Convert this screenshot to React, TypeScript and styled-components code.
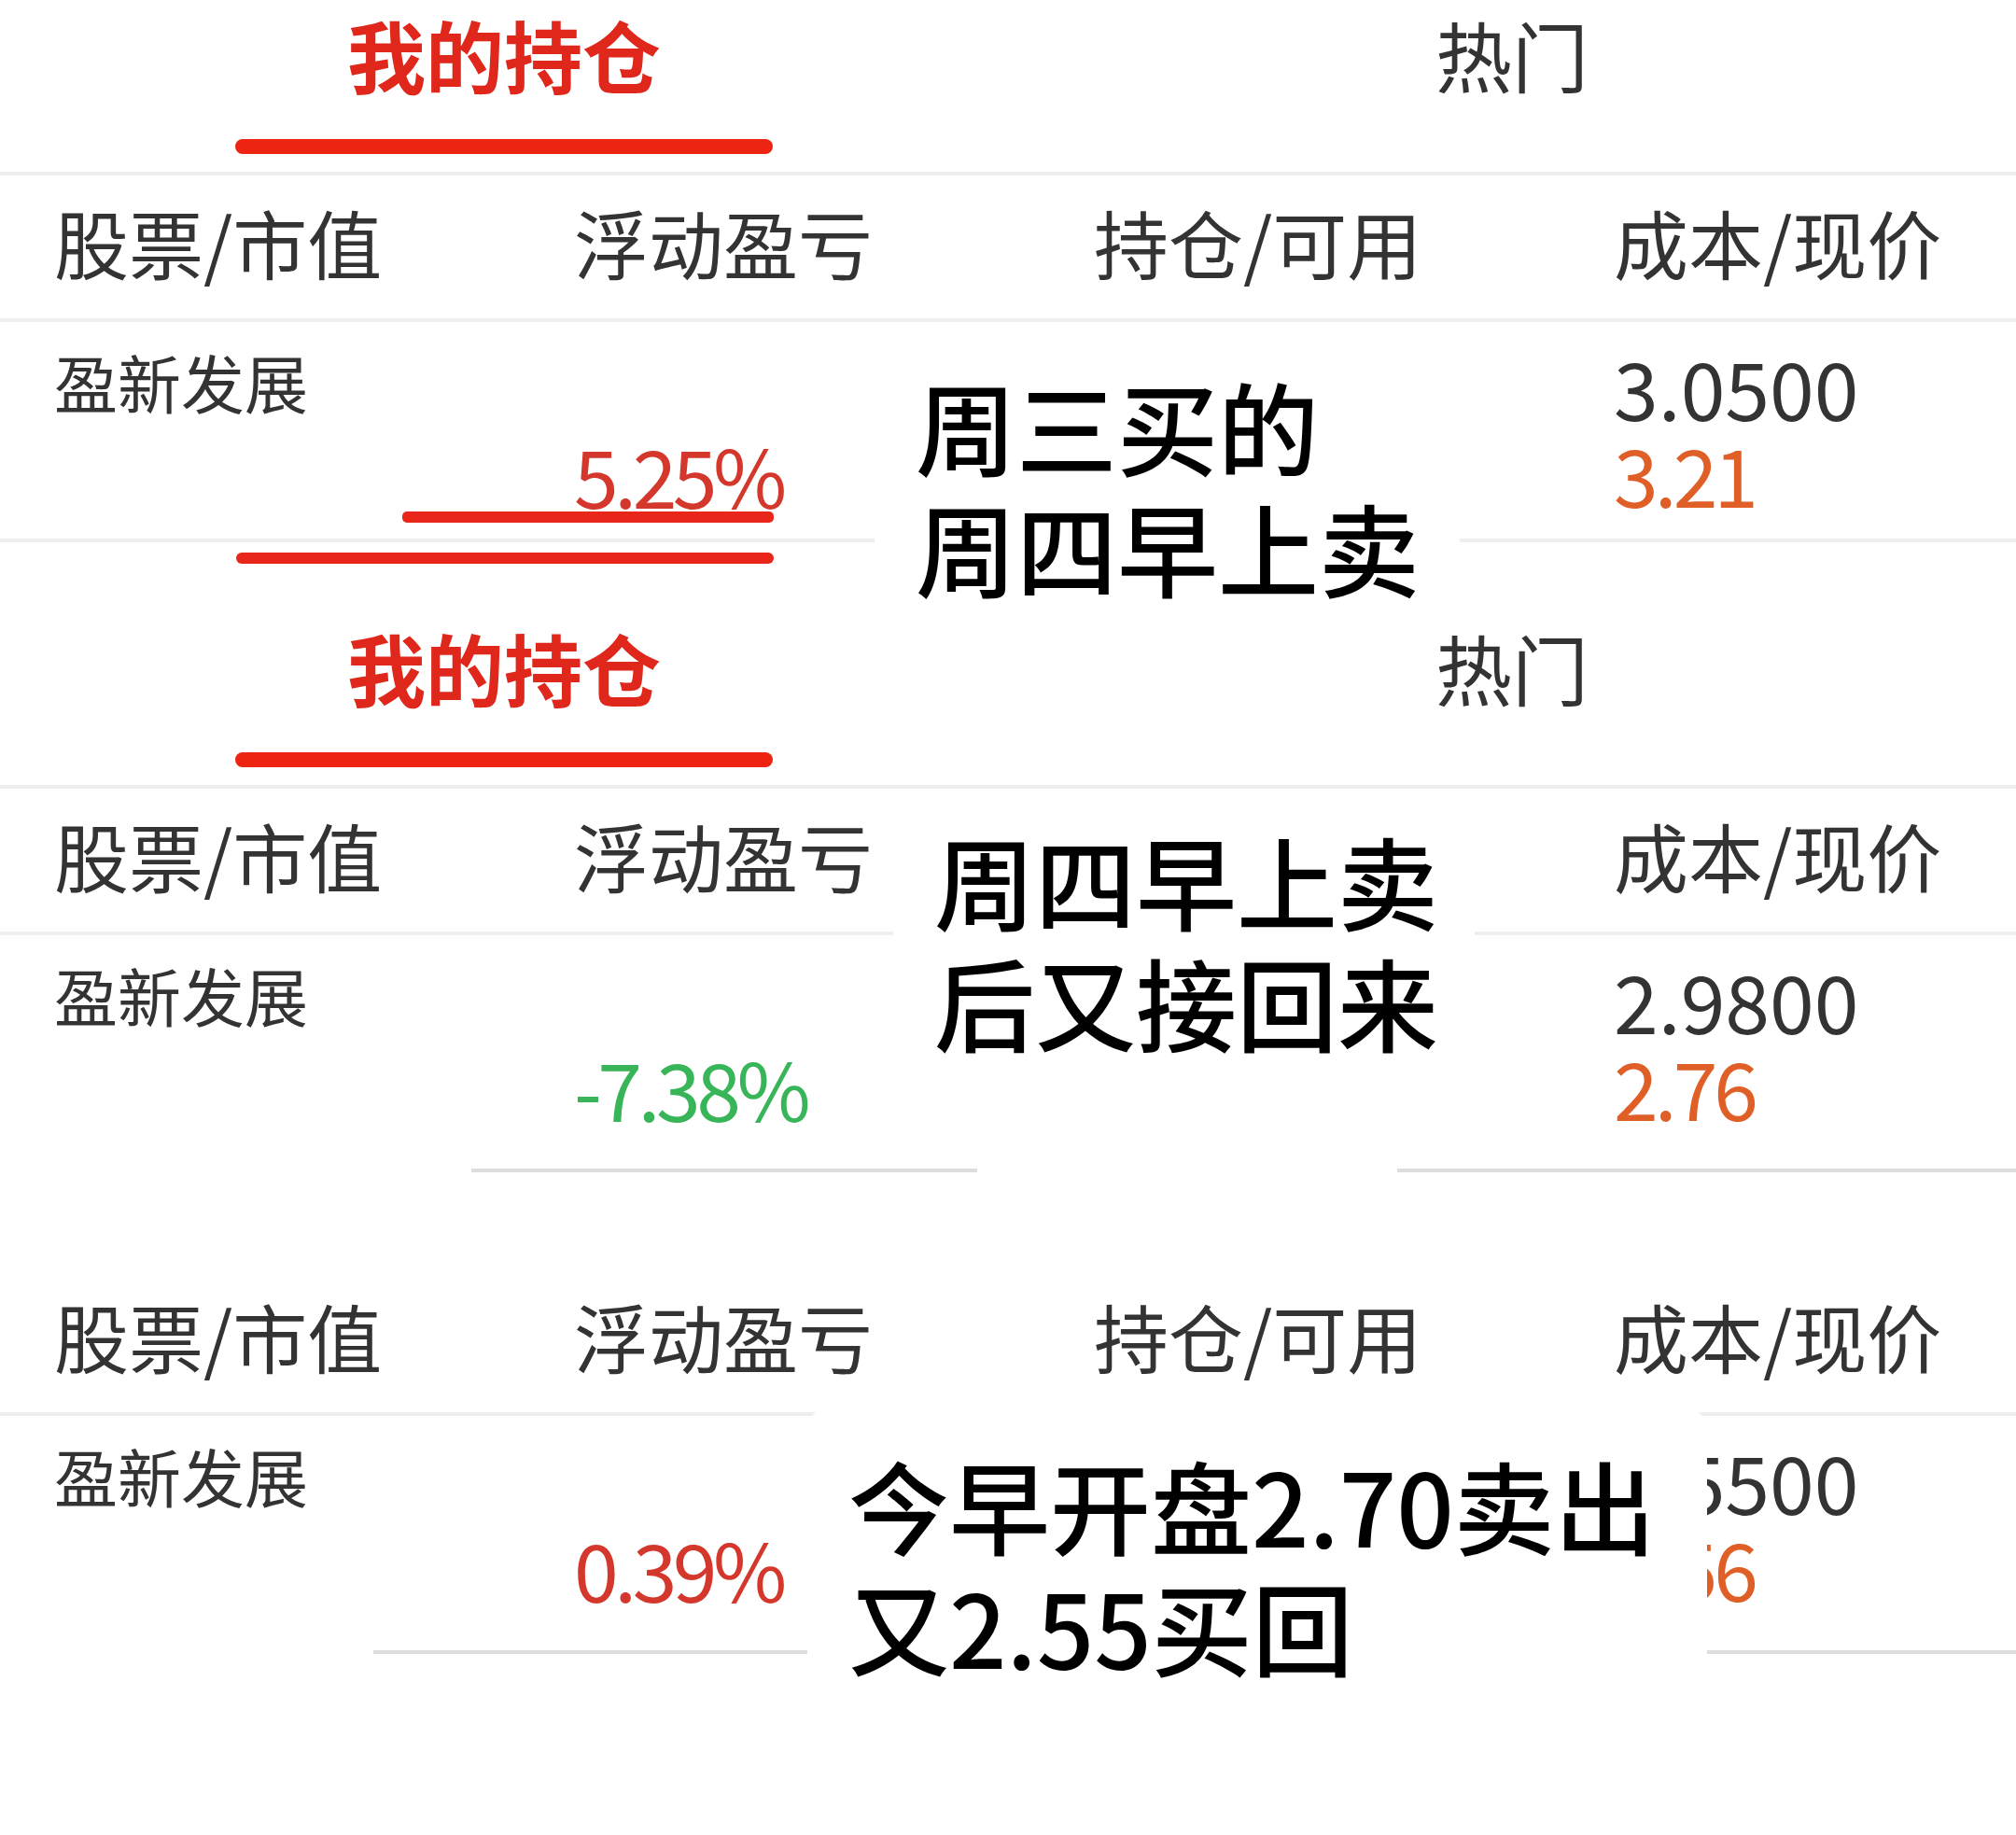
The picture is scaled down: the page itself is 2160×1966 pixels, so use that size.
import React from 'react';
import styled, { createGlobalStyle } from 'styled-components';

const GlobalStyle = createGlobalStyle`
  html, body {
    margin: 0;
    padding: 0;
    background: #fff;
  }
  body {
    font-family: "Noto Sans CJK SC", "Noto Sans", sans-serif;
  }
`;

const Page = styled.div`
  position: relative;
  width: 2160px;
  height: 1966px;
  overflow: hidden;
  background: #fff;
  display: flex;
  flex-direction: column;
`;

const TabBar = styled.div<{ $top: number }>`
  display: grid;
  grid-template-columns: 1fr 1fr;
  padding-top: ${p => p.$top}px;
  padding-bottom: 19px;
`;

const Tab = styled.div`
  display: flex;
  flex-direction: column;
  align-items: center;
`;

const TabLabel = styled.div<{ $active?: boolean }>`
  font-size: ${p => (p.$active ? 84 : 82)}px;
  line-height: 100px;
  font-weight: ${p => (p.$active ? 700 : 400)};
  color: ${p => (p.$active ? '#e0271c' : '#333')};
  white-space: nowrap;
`;

const TabLine = styled.div`
  width: 576px;
  height: 16px;
  margin-top: 41px;
  border-radius: 8px;
  background: #ee2412;
`;

const Divider = styled.div`
  height: 4px;
  background: #eeeeee;
`;

const Columns = styled.div<{ $height: number }>`
  position: relative;
  display: grid;
  grid-template-columns: 557px 557px 557px 1fr;
  padding-left: 58px;
  height: ${p => p.$height}px;
`;

const HeadCell = styled.div`
  align-self: center;
  padding-bottom: 14px;
  font-size: 80px;
  line-height: 80px;
  color: #333;
  white-space: nowrap;
`;

const Cell = styled.div<{ $top: number }>`
  padding-top: ${p => p.$top}px;
  display: flex;
  flex-direction: column;
`;

const StockName = styled.div`
  font-size: 68px;
  line-height: 68px;
  color: #333;
  white-space: nowrap;
`;

type Tone = 'up' | 'down' | 'plain' | 'price';

const toneColor: Record<Tone, string> = {
  up: '#d4382c',
  down: '#38b558',
  plain: '#333',
  price: '#df5f27',
};

const Num = styled.div<{ $tone: Tone }>`
  font-size: 86px;
  line-height: 93px;
  letter-spacing: ${p => (p.$tone === 'price' ? -4 : 0)}px;
  white-space: nowrap;
  color: ${p => toneColor[p.$tone]};
`;

const Percent = styled(Num)`
  line-height: 86px;
  letter-spacing: -4.5px;
`;

const RedMark = styled.div<{ $left: number; $width: number; $top: number }>`
  position: absolute;
  left: ${p => p.$left}px;
  top: ${p => p.$top}px;
  width: ${p => p.$width}px;
  height: 12px;
  border-radius: 5px;
  background: #e8261a;
`;

const RedStrip = styled.div`
  margin: 11px 0 0 253px;
  width: 576px;
  height: 12px;
  border-radius: 6px;
  background: #e8261a;
`;

const LineRow = styled.div<{ $gap?: number }>`
  display: flex;
  margin-bottom: ${p => p.$gap ?? 0}px;
`;

const LineSeg = styled.div<{ $left: number; $width: number }>`
  margin-left: ${p => p.$left}px;
  width: ${p => p.$width}px;
  height: 4px;
  background: #dddddd;
`;

const Note = styled.div<{ $x: number; $y: number; $w: number; $h: number; $pt: number }>`
  position: absolute;
  left: ${p => p.$x}px;
  top: ${p => p.$y}px;
  width: ${p => p.$w}px;
  height: ${p => p.$h}px;
  box-sizing: border-box;
  padding: ${p => p.$pt}px 0 0 44px;
  background: #fff;
  border-radius: 24px;
  font-size: 108px;
  line-height: 130px;
  font-weight: 500;
  color: #000;
  white-space: pre;
`;

const headers = ['股票/市值', '浮动盈亏', '持仓/可用', '成本/现价'];

type Holding = {
  pct: string;
  tone: 'up' | 'down';
  cost: string;
  now: string;
};

const Tabs = ({ top }: { top: number }) => (
  <TabBar $top={top}>
    <Tab>
      <TabLabel $active>我的持仓</TabLabel>
      <TabLine />
    </Tab>
    <Tab>
      <TabLabel>热门</TabLabel>
    </Tab>
  </TabBar>
);

const HeaderRow = () => (
  <Columns $height={153}>
    {headers.map(h => (
      <HeadCell key={h}>{h}</HeadCell>
    ))}
  </Columns>
);

const StockRow = ({ item, height, children }: { item: Holding; height: number; children?: React.ReactNode }) => (
  <Columns $height={height}>
    <Cell $top={30}>
      <StockName>盈新发展</StockName>
    </Cell>
    <Cell $top={120}>
      <Percent $tone={item.tone}>{item.pct}</Percent>
    </Cell>
    <Cell $top={0} />
    <Cell $top={22}>
      <Num $tone="plain">{item.cost}</Num>
      <Num $tone="price">{item.now}</Num>
    </Cell>
    {children}
  </Columns>
);

export default function App() {
  return (
    <>
      <GlobalStyle />
      <Page>
        <Tabs top={8} />
        <Divider />
        <HeaderRow />
        <Divider />
        <StockRow item={{ pct: '5.25%', tone: 'up', cost: '3.0500', now: '3.21' }} height={232}>
          <RedMark $left={431} $top={203} $width={398} />
        </StockRow>
        <Divider />
        <RedStrip />

        <Tabs top={61} />
        <Divider />
        <HeaderRow />
        <Divider />
        <StockRow item={{ pct: '-7.38%', tone: 'down', cost: '2.9800', now: '2.76' }} height={250} />
        <LineRow $gap={104}>
          <LineSeg $left={505} $width={542} />
          <LineSeg $left={450} $width={663} />
        </LineRow>

        <HeaderRow />
        <Divider />
        <StockRow item={{ pct: '0.39%', tone: 'up', cost: '2.5500', now: '2.56' }} height={251} />
        <LineRow>
          <LineSeg $left={400} $width={1760} />
        </LineRow>

        <Note $x={937} $y={390} $w={627} $h={275} $pt={0}>
          {'周三买的\n周四早上卖'}
        </Note>
        <Note $x={957} $y={845} $w={623} $h={295} $pt={32}>
          {'周四早上卖\n后又接回来'}
        </Note>
        <Note $x={865} $y={1508} $w={964} $h={297} $pt={38}>
          {'今早开盘2.70卖出\n又2.55买回'}
        </Note>
      </Page>
    </>
  );
}
